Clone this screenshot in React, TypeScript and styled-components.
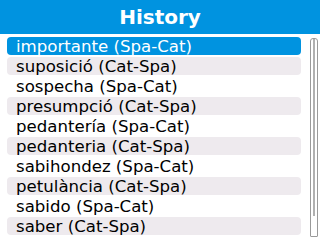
import React from "react";
import styled, { createGlobalStyle } from "styled-components";

const GlobalStyle = createGlobalStyle`
  html, body {
    margin: 0;
    padding: 0;
    background: #ffffff;
  }
  body {
    font-family: "DejaVu Sans", Verdana, sans-serif;
  }
`;

const Screen = styled.div`
  width: 320px;
  height: 240px;
  display: flex;
  flex-direction: column;
  overflow: hidden;
  background: #ffffff;
`;

const Header = styled.div`
  height: 34px;
  flex: none;
  background: #0093e0;
  color: #ffffff;
  display: flex;
  align-items: center;
  justify-content: center;
  font-size: 20px;
  font-weight: bold;
`;

const Body = styled.div`
  flex: 1;
  display: flex;
  padding: 3px 2px 0 7px;
  gap: 9px;
`;

const List = styled.div`
  flex: 1;
  display: flex;
  flex-direction: column;
  gap: 2px;
`;

const Row = styled.div<{ selected?: boolean; shaded?: boolean }>`
  height: 18px;
  display: flex;
  align-items: center;
  padding-left: 9px;
  border-radius: 4px;
  font-size: 16.6px;
  white-space: nowrap;
  background: ${(p) => (p.selected ? "#0093e0" : p.shaded ? "#eeeaee" : "transparent")};
  color: ${(p) => (p.selected ? "#ffffff" : "#000000")};
`;

const Track = styled.div`
  width: 4px;
  height: 197px;
  margin-top: 1px;
  border: 1px solid #9a9a9a;
  border-radius: 3px 3px 1px 1px;
  padding: 0 1px;
  display: flex;
`;

const Thumb = styled.div`
  width: 2px;
  height: 177px;
  margin: 0 auto;
  background: #b0b0b0;
`;

const entries = [
  "importante (Spa-Cat)",
  "suposició (Cat-Spa)",
  "sospecha (Spa-Cat)",
  "presumpció (Cat-Spa)",
  "pedantería (Spa-Cat)",
  "pedanteria (Cat-Spa)",
  "sabihondez (Spa-Cat)",
  "petulància (Cat-Spa)",
  "sabido (Spa-Cat)",
  "saber (Cat-Spa)",
];

const App: React.FC = () => {
  return (
    <Screen>
      <GlobalStyle />
      <Header>History</Header>
      <Body>
        <List>
          {entries.map((label, index) => (
            <Row key={label} selected={index === 0} shaded={index % 2 === 1}>
              {label}
            </Row>
          ))}
        </List>
        <Track>
          <Thumb />
        </Track>
      </Body>
    </Screen>
  );
};

export default App;
